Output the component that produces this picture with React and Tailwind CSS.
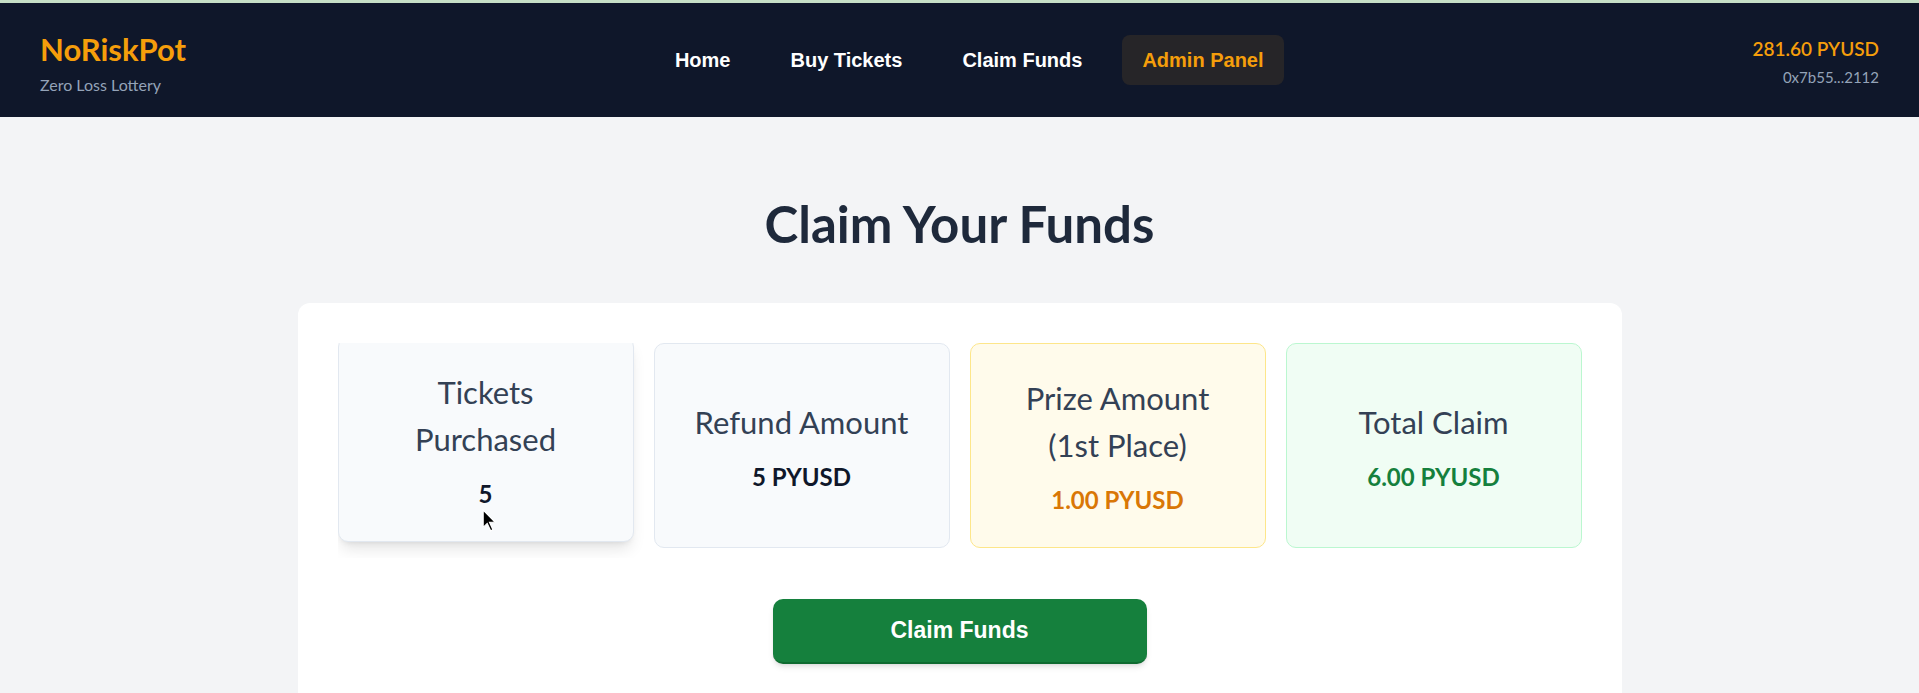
import { useState } from "react";

const navLinks = ["Home", "Buy Tickets", "Claim Funds", "Admin Panel"];

const stats = [
  {
    id: "tickets",
    label: ["Tickets", "Purchased"],
    value: "5",
    box: "bg-[#f8fafc] border-[#e2e8f0] -translate-y-[6px] shadow-lg",
    valueColor: "text-[#0f172a]",
  },
  {
    id: "refund",
    label: ["Refund Amount"],
    value: "5 PYUSD",
    box: "bg-[#f8fafc] border-[#e2e8f0]",
    valueColor: "text-[#0f172a]",
  },
  {
    id: "prize",
    label: ["Prize Amount", "(1st Place)"],
    value: "1.00 PYUSD",
    box: "bg-[#fffbeb] border-[#fde68a]",
    valueColor: "text-[#d97706]",
  },
  {
    id: "total",
    label: ["Total Claim"],
    value: "6.00 PYUSD",
    box: "bg-[#f0fdf4] border-[#bbf7d0]",
    valueColor: "text-[#15803d]",
  },
];

// mouse pointer that was caught in the screenshot
function Cursor() {
  return (
    <svg
      className="absolute left-[143px] top-[171px]"
      width="15"
      height="23"
      viewBox="0 0 13 20"
    >
      <path
        d="M1 1 L1 16 L4.5 12.5 L7.5 19 L9.5 18 L6.5 11.5 L11.5 11.5 Z"
        fill="#000"
        stroke="#fff"
        strokeWidth="1"
      />
    </svg>
  );
}

export default function App() {
  const [active] = useState("Admin Panel");

  return (
    <div className="min-h-screen bg-[#f3f4f6] font-['Lato',sans-serif]">
      <div className="h-[3px] bg-[#c6dfc6]" />

      <header className="h-[114px] bg-[#0f172a] px-10 flex items-center justify-between">
        <div className="pt-[5px]">
          <div className="text-[31px] leading-[36px] font-bold text-[#f59e0b]">NoRiskPot</div>
          <div className="mt-[8px] text-[16px] leading-[20px] text-[#94a3b8]">Zero Loss Lottery</div>
        </div>

        <nav className="flex items-center gap-5 font-['Liberation_Sans',Arial,sans-serif]">
          {navLinks.map(link => (
            <a
              key={link}
              href="#"
              className={
                link === active
                  ? "px-5 py-2.5 rounded-lg bg-[#262528] text-[#f59e0b] text-[20px] font-bold"
                  : "px-5 py-2.5 rounded-lg text-white text-[20px] font-bold"
              }
            >
              {link}
            </a>
          ))}
        </nav>

        <div className="pt-[4px] text-right">
          <div className="text-[19px] leading-[24px] font-semibold text-[#f59e0b]">281.60 PYUSD</div>
          <div className="mt-[6px] text-[15px] leading-[20px] text-[#94a3b8]">0x7b55...2112</div>
        </div>
      </header>

      <main className="pt-[81px]">
        <h1 className="text-center text-[51px] leading-[51px] font-bold text-[#1e293b] mb-[54px]">
          Claim Your Funds
        </h1>

        <section className="w-[1324px] mx-auto bg-white rounded-[12px] px-10 pt-10 pb-10">
          <div className="grid grid-cols-4 gap-5 overflow-hidden pb-[10px]">
            {stats.map(s => (
              <div
                key={s.id}
                className={`relative border rounded-[10px] px-6 py-[31px] flex flex-col justify-center items-center text-center ${s.box}`}
              >
                <div className="text-[31px] leading-[47px] text-[#334155]">
                  {s.label.map(line => (
                    <div key={line}>{line}</div>
                  ))}
                </div>
                <div className={`mt-[15px] text-[24px] leading-[32px] font-bold ${s.valueColor}`}>
                  {s.value}
                </div>
                {s.id === "tickets" && <Cursor />}
              </div>
            ))}
          </div>

          <div className="mt-[41px] flex justify-center">
            <button
              type="button"
              className="w-[374px] h-[65px] rounded-[10px] bg-[#15803d] border-b-2 border-[#0f6b30] shadow-md text-white text-[23px] font-bold font-['Liberation_Sans',Arial,sans-serif]"
            >
              Claim Funds
            </button>
          </div>
        </section>
      </main>
    </div>
  );
}
